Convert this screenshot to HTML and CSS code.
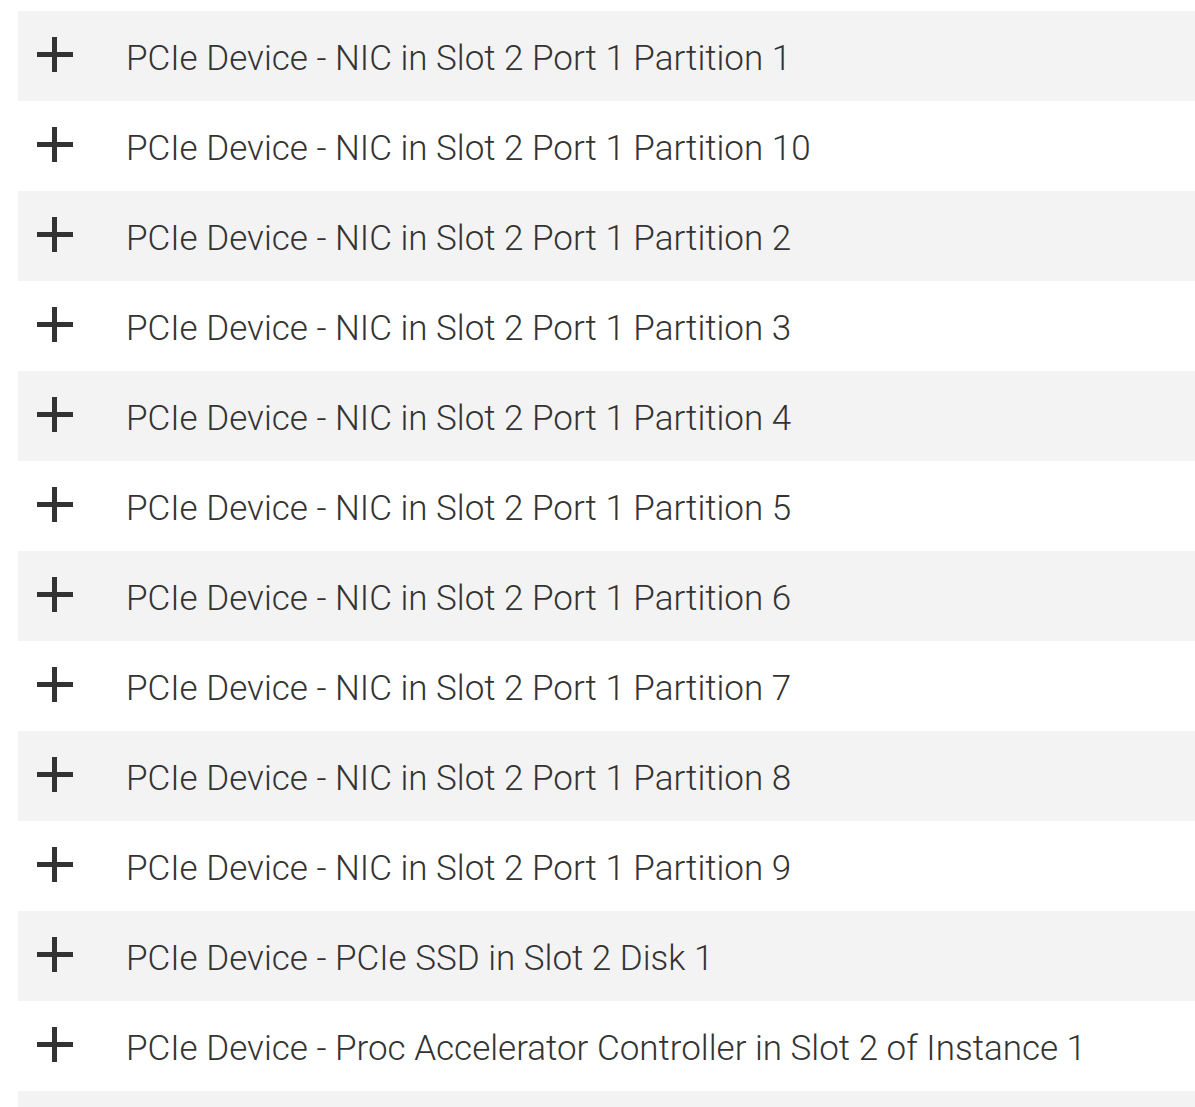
FILE: index.html
```html
<!DOCTYPE html>
<html>
<head>
<meta charset="utf-8">
<link rel="stylesheet" href="styles.css">
</head>
<body>
<ul class="list">
  <li class="row"><span class="plus"></span><span class="label">PCIe Device - NIC in Slot 2 Port 1 Partition 1</span></li>
  <li class="row"><span class="plus"></span><span class="label">PCIe Device - NIC in Slot 2 Port 1 Partition 10</span></li>
  <li class="row"><span class="plus"></span><span class="label">PCIe Device - NIC in Slot 2 Port 1 Partition 2</span></li>
  <li class="row"><span class="plus"></span><span class="label">PCIe Device - NIC in Slot 2 Port 1 Partition 3</span></li>
  <li class="row"><span class="plus"></span><span class="label">PCIe Device - NIC in Slot 2 Port 1 Partition 4</span></li>
  <li class="row"><span class="plus"></span><span class="label">PCIe Device - NIC in Slot 2 Port 1 Partition 5</span></li>
  <li class="row"><span class="plus"></span><span class="label">PCIe Device - NIC in Slot 2 Port 1 Partition 6</span></li>
  <li class="row"><span class="plus"></span><span class="label">PCIe Device - NIC in Slot 2 Port 1 Partition 7</span></li>
  <li class="row"><span class="plus"></span><span class="label">PCIe Device - NIC in Slot 2 Port 1 Partition 8</span></li>
  <li class="row"><span class="plus"></span><span class="label">PCIe Device - NIC in Slot 2 Port 1 Partition 9</span></li>
  <li class="row"><span class="plus"></span><span class="label">PCIe Device - PCIe SSD in Slot 2 Disk 1</span></li>
  <li class="row"><span class="plus"></span><span class="label">PCIe Device - Proc Accelerator Controller in Slot 2 of Instance 1</span></li>
  <li class="row row-partial"></li>
</ul>
</body>
</html>
```
FILE: styles.css
```css
html, body {
  margin: 0;
  padding: 0;
  background: #ffffff;
  overflow: hidden;
}
.list {
  list-style: none;
  margin: 0;
  padding: 11px 0 0 18px;
}
.row {
  display: flex;
  align-items: center;
  height: 90px;
  padding-left: 19px;
  font-family: Roboto, "Liberation Sans", sans-serif;
  font-weight: 300;
  font-size: 35px;
  color: #333333;
}
.row:nth-child(odd) {
  background: #f3f3f3;
}
.plus {
  position: relative;
  flex: 0 0 36px;
  width: 36px;
  height: 35px;
  align-self: flex-start;
  margin-top: 26px;
  margin-right: 53px;
}
.plus::before,
.plus::after {
  content: "";
  position: absolute;
  background: #333333;
}
.plus::before {
  left: 0;
  right: 0;
  top: 15px;
  height: 5px;
}
.plus::after {
  top: 0;
  bottom: 0;
  left: 15px;
  width: 5px;
}
.label {
  white-space: nowrap;
  line-height: 1;
  padding-top: 4px;
}
```
